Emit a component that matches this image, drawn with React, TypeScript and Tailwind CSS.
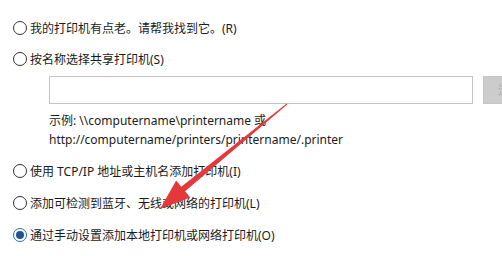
import React from "react";

const font = {
  fontFamily: '"Noto Sans", "Noto Sans CJK SC", sans-serif',
};

function Radio({ checked = false }: { checked?: boolean }) {
  return (
    <span
      className={
        "flex h-[14px] w-[14px] shrink-0 items-center justify-center rounded-full border bg-white " +
        (checked ? "border-[#2d6db5]" : "border-[#333333]")
      }
    >
      {checked && <span className="h-[8px] w-[8px] rounded-full bg-[#1f5494]" />}
    </span>
  );
}

function Row({ label, checked = false }: { label: string; checked?: boolean }) {
  return (
    <div className="flex h-[20px] items-center gap-[3px]">
      <Radio checked={checked} />
      <span className="whitespace-nowrap">{label}</span>
    </div>
  );
}

export default function App() {
  return (
    <div
      className="relative h-[256px] w-[502px] overflow-hidden bg-white pl-[13px] pt-[18px] text-[12px] leading-[19px] text-[#1b1b1b]"
      style={font}
    >
      <Row label="我的打印机有点老。请帮我找到它。(R)" />
      <div className="mt-[11px]">
        <Row label="按名称选择共享打印机(S)" />
      </div>
      <div className="mt-[7px] flex items-center pl-[36px]">
        <div className="h-[28px] w-[424px] shrink-0 border border-[#c4c4c4] bg-white" />
        <div className="ml-[10px] flex h-[28px] w-[40px] shrink-0 items-center overflow-hidden border border-[#c6c6c6] bg-[#cccccc] pl-[14px] text-[#a8a8a8] whitespace-nowrap">
          浏
        </div>
      </div>
      <div className="mt-[7px] pl-[36px]">
        <div className="whitespace-nowrap">示例: \\computername\printername 或</div>
        <div className="whitespace-nowrap">http://computername/printers/printername/.printer</div>
      </div>
      <div className="mt-[12px]">
        <Row label="使用 TCP/IP 地址或主机名添加打印机(I)" />
      </div>
      <div className="mt-[12px]">
        <Row label="添加可检测到蓝牙、无线或网络的打印机(L)" />
      </div>
      <div className="mt-[12px]">
        <Row label="通过手动设置添加本地打印机或网络打印机(O)" checked />
      </div>

      <svg
        className="pointer-events-none absolute left-0 top-0"
        width="502"
        height="256"
        viewBox="0 0 502 256"
      >
        <polygon
          points="287.3,104.4 286.7,103.6 181.3,186.7 176.2,180.5 160,209 190.2,197.5 185.1,191.3"
          fill="#e5383b"
        />
      </svg>
    </div>
  );
}
